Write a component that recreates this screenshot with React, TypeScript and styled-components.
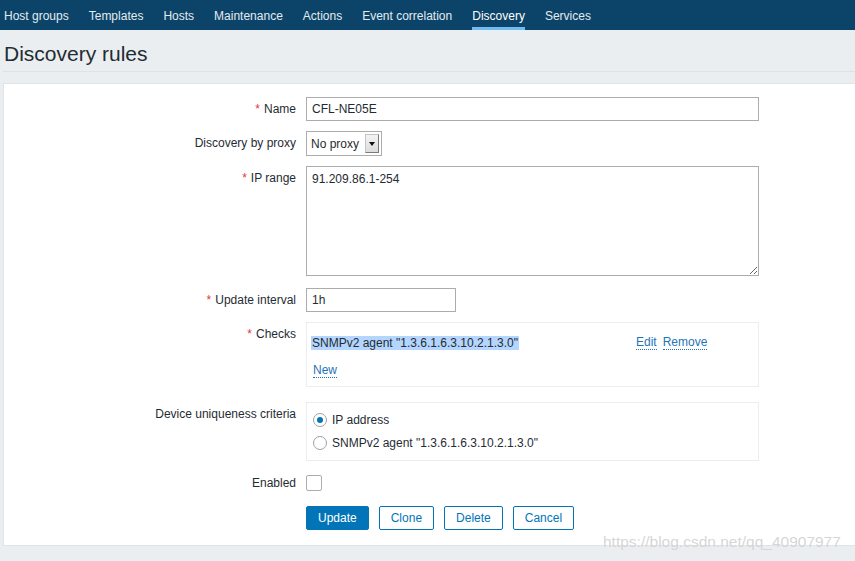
import React from "react";
import styled, { createGlobalStyle } from "styled-components";

const Global = createGlobalStyle`
  html, body { margin: 0; padding: 0; background: #ebeef0; }
  body { font-family: Arial, "Liberation Sans", sans-serif; font-size: 12px; color: #1f2c33; overflow: hidden; }
  * { box-sizing: border-box; }
  ::selection { background: #b4d5fe; }
`;

const Page = styled.div`
  width: 855px;
  height: 561px;
  position: relative;
  overflow: hidden;
`;

const Nav = styled.nav`
  height: 30px;
  background: #0b4468;
  display: flex;
  align-items: stretch;
  gap: 20px;
  padding-left: 4px;
`;

const NavItem = styled.a<{ $active?: boolean }>`
  display: flex;
  align-items: center;
  color: ${(p) => (p.$active ? "#ffffff" : "#e4ebf0")};
  text-decoration: none;
  font-size: 12px;
  padding-top: 1px;
  border-bottom: 3px solid ${(p) => (p.$active ? "#6ebcf2" : "transparent")};
  border-top: 3px solid transparent;
`;

const Main = styled.div`
  padding-left: 3px;
`;

const Header = styled.header`
  height: 42px;
  padding-top: 7px;
  display: flex;
  align-items: center;
  border-bottom: 1px solid #dde2e5;
  margin-bottom: 11px;
`;

const Title = styled.h1`
  margin: 0;
  font-size: 21px;
  font-weight: normal;
  line-height: 24px;
  color: #1f2c33;
  padding-left: 1px;
`;

const Panel = styled.div`
  background: #ffffff;
  border: 1px solid #dfe4e7;
  border-right: none;
  height: 463px;
  padding-top: 13px;
`;

const Form = styled.div`
  display: grid;
  grid-template-columns: 292px 453px;
  column-gap: 10px;
  align-items: start;
`;

const Label = styled.div<{ $gap?: number }>`
  text-align: right;
  padding-top: 5px;
  line-height: 14px;
  margin-bottom: ${(p) => p.$gap ?? 10}px;
  white-space: nowrap;
`;

const Req = styled.span`
  color: #e33734;
  margin-right: 4px;
`;

const Field = styled.div<{ $gap?: number }>`
  margin-bottom: ${(p) => p.$gap ?? 10}px;
  display: flex;
  align-items: center;
  min-height: 24px;
`;

const TextInput = styled.input<{ $w: number }>`
  width: ${(p) => p.$w}px;
  height: 24px;
  border: 1px solid #acacac;
  padding: 0 5px;
  font-family: inherit;
  font-size: 12px;
  color: #1f2c33;
  outline: none;
  background: #fff;
`;

const Select = styled.div`
  width: 76px;
  height: 25px;
  border: 1px solid #acacac;
  display: flex;
  align-items: stretch;
  background: #fff;
`;

const SelectText = styled.span`
  flex: 1;
  display: flex;
  align-items: center;
  padding-left: 4px;
  font-size: 12px;
`;

const SelectButton = styled.span`
  width: 14px;
  margin: 2px 2px 2px 0;
  background: linear-gradient(#f4f4f4, #dcdcdc);
  border: 1px solid #c4c4c4;
  border-right-color: #7a7a7a;
  border-bottom-color: #7a7a7a;
  display: flex;
  align-items: center;
  justify-content: center;
  &::after {
    content: "";
    border-left: 3px solid transparent;
    border-right: 3px solid transparent;
    border-top: 4px solid #111;
  }
`;

const TextArea = styled.textarea`
  width: 453px;
  height: 110px;
  border: 1px solid #acacac;
  padding: 5px;
  font-family: inherit;
  font-size: 12px;
  color: #1f2c33;
  outline: none;
  resize: both;
  display: block;
`;

const Box = styled.div<{ $h: number }>`
  width: 453px;
  height: ${(p) => p.$h}px;
  border: 1px solid #ebeef0;
`;

const CheckRow = styled.div`
  display: flex;
  align-items: center;
  padding: 13px 0 0 5px;
  line-height: 14px;
`;

const CheckName = styled.span`
  width: 324px;
`;

const Selected = styled.span`
  background: #b4d5fe;
  padding: 0 1px 0 1px;
  margin-left: -1px;
`;

const Actions = styled.span`
  display: flex;
  gap: 6px;
`;

const Link = styled.a`
  color: #1f74b8;
  text-decoration: none;
  border-bottom: 1px dotted #1f74b8;
  line-height: 13px;
  cursor: pointer;
`;

const NewRow = styled.div`
  padding: 13px 0 0 6px;
  line-height: 14px;
`;

const RadioList = styled.div`
  display: flex;
  flex-direction: column;
  gap: 9px;
  padding: 10px 0 0 6px;
`;

const RadioLine = styled.label`
  display: flex;
  align-items: center;
  gap: 5px;
  line-height: 14px;
`;

const Radio = styled.span<{ $checked?: boolean }>`
  width: 14px;
  height: 14px;
  border-radius: 50%;
  border: 1px solid #9aa3a8;
  background: #fff;
  display: flex;
  align-items: center;
  justify-content: center;
  &::after {
    content: "";
    width: 6px;
    height: 6px;
    border-radius: 50%;
    background: ${(p) => (p.$checked ? "#0275b8" : "transparent")};
  }
`;

const Checkbox = styled.span`
  width: 16px;
  height: 16px;
  border: 1px solid #acacac;
  border-radius: 2px;
  background: #fff;
`;

const Buttons = styled.div`
  display: flex;
  gap: 10px;
`;

const Button = styled.button<{ $primary?: boolean }>`
  height: 24px;
  padding: 0 11px;
  font-family: inherit;
  font-size: 12px;
  border-radius: 2px;
  border: 1px solid #0275b8;
  background: ${(p) => (p.$primary ? "#0275b8" : "#ffffff")};
  color: ${(p) => (p.$primary ? "#ffffff" : "#0275b8")};
  cursor: pointer;
`;

const Watermark = styled.div`
  position: absolute;
  left: 603px;
  top: 533px;
  font-size: 15.5px;
  color: rgba(200, 200, 200, 0.75);
  font-family: Arial, "Liberation Sans", sans-serif;
  text-shadow: 0 0 1px rgba(255, 255, 255, 0.6);
  pointer-events: none;
  white-space: nowrap;
`;

const navItems = [
  "Host groups",
  "Templates",
  "Hosts",
  "Maintenance",
  "Actions",
  "Event correlation",
  "Discovery",
  "Services",
];

export default function App() {
  return (
    <Page>
      <Global />
      <Nav>
        {navItems.map((n) => (
          <NavItem key={n} $active={n === "Discovery"}>
            {n}
          </NavItem>
        ))}
      </Nav>
      <Main>
        <Header>
          <Title>Discovery rules</Title>
        </Header>
        <Panel>
          <Form>
            <Label>
              <Req>*</Req>Name
            </Label>
            <Field>
              <TextInput $w={453} value="CFL-NE05E" readOnly />
            </Field>

            <Label $gap={10}>Discovery by proxy</Label>
            <Field $gap={10}>
              <Select>
                <SelectText>No proxy</SelectText>
                <SelectButton />
              </Select>
            </Field>

            <Label $gap={12}>
              <Req>*</Req>IP range
            </Label>
            <Field $gap={12}>
              <TextArea value="91.209.86.1-254" readOnly />
            </Field>

            <Label $gap={10}>
              <Req>*</Req>Update interval
            </Label>
            <Field $gap={10}>
              <TextInput $w={150} value="1h" readOnly />
            </Field>

            <Label $gap={15}>
              <Req>*</Req>Checks
            </Label>
            <Field $gap={15}>
              <Box $h={65}>
                <CheckRow>
                  <CheckName>
                    <Selected>SNMPv2 agent "1.3.6.1.6.3.10.2.1.3.0"</Selected>
                  </CheckName>
                  <Actions>
                    <Link>Edit</Link>
                    <Link>Remove</Link>
                  </Actions>
                </CheckRow>
                <NewRow>
                  <Link>New</Link>
                </NewRow>
              </Box>
            </Field>

            <Label $gap={10}>Device uniqueness criteria</Label>
            <Field $gap={10}>
              <Box $h={59}>
                <RadioList>
                  <RadioLine>
                    <Radio $checked />
                    IP address
                  </RadioLine>
                  <RadioLine>
                    <Radio />
                    SNMPv2 agent "1.3.6.1.6.3.10.2.1.3.0"
                  </RadioLine>
                </RadioList>
              </Box>
            </Field>

            <Label $gap={11}>Enabled</Label>
            <Field $gap={11}>
              <Checkbox />
            </Field>

            <div />
            <Field>
              <Buttons>
                <Button $primary>Update</Button>
                <Button>Clone</Button>
                <Button>Delete</Button>
                <Button>Cancel</Button>
              </Buttons>
            </Field>
          </Form>
        </Panel>
      </Main>
      <Watermark>https://blog.csdn.net/qq_40907977</Watermark>
    </Page>
  );
}
